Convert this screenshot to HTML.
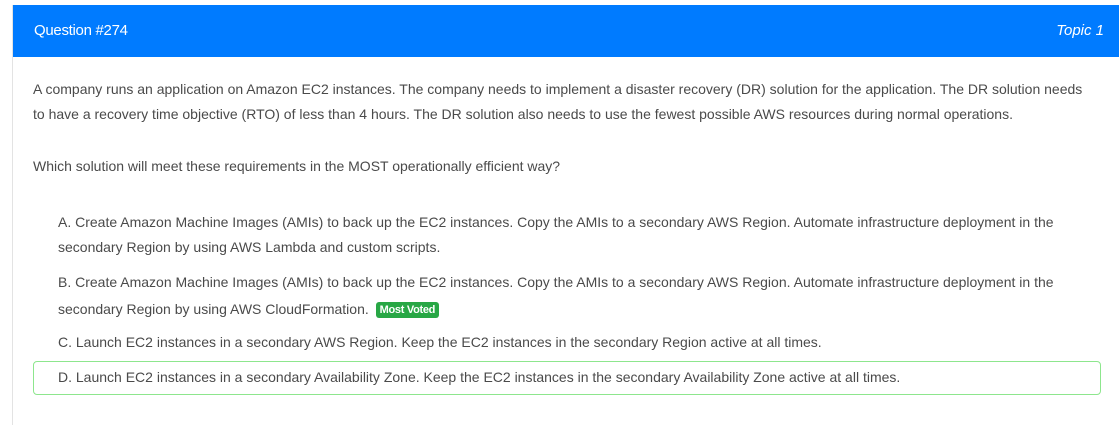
<!DOCTYPE html>
<html><head><style>
body{margin:0;background:#fff;width:1119px;height:411px;overflow:hidden;font-family:"Liberation Sans Narrow","Liberation Sans",sans-serif;}
.card{position:absolute;left:12px;top:5px;width:1107px;height:420px;border-left:1px solid #e3e3e3;}
.hdr{position:absolute;left:0;top:0;width:1107px;height:52px;background:#007bff;color:#fff;font-size:15px;}
.hdr .q{position:absolute;left:21px;top:17px;letter-spacing:-0.3px;}
.hdr .t{position:absolute;right:16px;top:17px;font-style:italic;}
.l{position:absolute;white-space:nowrap;font-size:14px;color:#4a4a4a;letter-spacing:0px;}
.badge{display:inline-block;background:#28a745;color:#fff;font-size:11px;font-weight:bold;padding:2px 4px;border-radius:3px;letter-spacing:-0.3px;vertical-align:1px;margin-left:3px}
.box{position:absolute;left:33px;top:361px;width:1066px;height:32px;border:1px solid #8de68d;border-radius:4px;}
</style></head><body>
<div class="card"><div class="hdr"><span class="q">Question #274</span><span class="t">Topic 1</span></div></div>
<div class="l" style="left:33px;top:81px">A company runs an application on Amazon EC2 instances. The company needs to implement a disaster recovery (DR) solution for the application. The DR solution needs</div>
<div class="l" style="left:33px;top:106px">to have a recovery time objective (RTO) of less than 4 hours. The DR solution also needs to use the fewest possible AWS resources during normal operations.</div>
<div class="l" style="left:33px;top:158px">Which solution will meet these requirements in the MOST operationally efficient way?</div>
<div class="l" style="left:58px;top:214px">A. Create Amazon Machine Images (AMIs) to back up the EC2 instances. Copy the AMIs to a secondary AWS Region. Automate infrastructure deployment in the</div>
<div class="l" style="left:58px;top:239px">secondary Region by using AWS Lambda and custom scripts.</div>
<div class="l" style="left:58px;top:274px">B. Create Amazon Machine Images (AMIs) to back up the EC2 instances. Copy the AMIs to a secondary AWS Region. Automate infrastructure deployment in the</div>
<div class="l" style="left:58px;top:301px">secondary Region by using AWS CloudFormation. <span class="badge">Most Voted</span></div>
<div class="l" style="left:58px;top:334px">C. Launch EC2 instances in a secondary AWS Region. Keep the EC2 instances in the secondary Region active at all times.</div>
<div class="box"></div>
<div class="l" style="left:58px;top:369px">D. Launch EC2 instances in a secondary Availability Zone. Keep the EC2 instances in the secondary Availability Zone active at all times.</div>
</body></html>
